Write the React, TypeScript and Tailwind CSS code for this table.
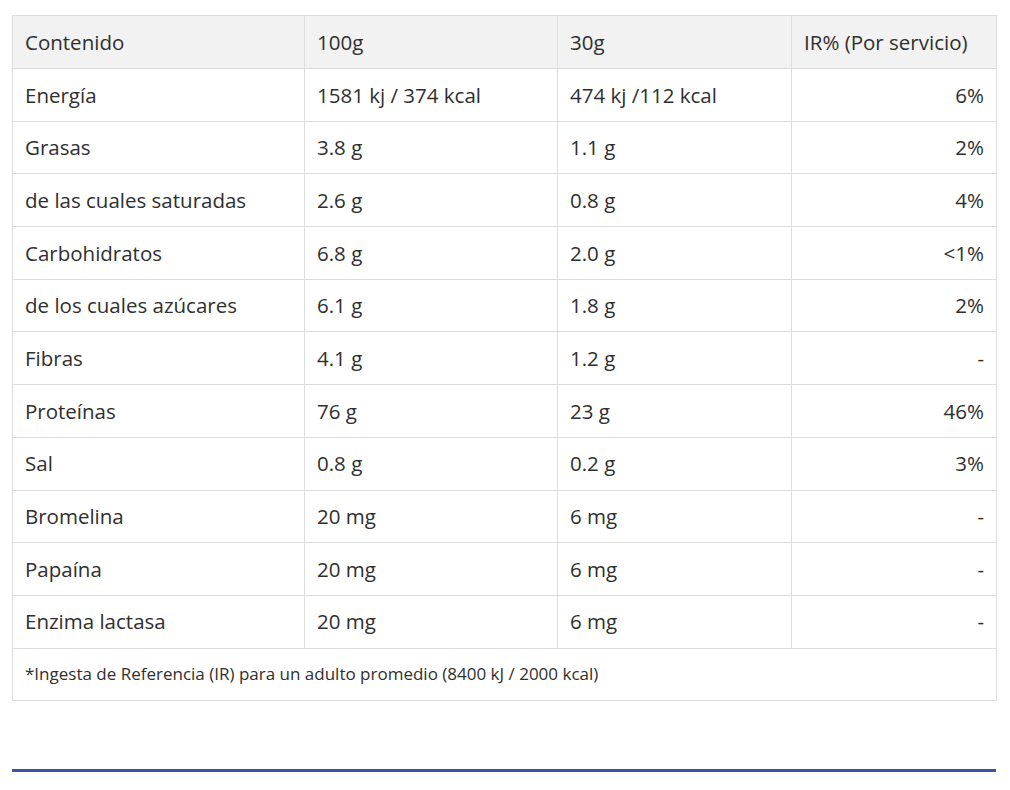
import React from "react";

const rows: [string, string, string, string][] = [
  ["Energía", "1581 kj / 374 kcal", "474 kj /112 kcal", "6%"],
  ["Grasas", "3.8 g", "1.1 g", "2%"],
  ["de las cuales saturadas", "2.6 g", "0.8 g", "4%"],
  ["Carbohidratos", "6.8 g", "2.0 g", "<1%"],
  ["de los cuales azúcares", "6.1 g", "1.8 g", "2%"],
  ["Fibras", "4.1 g", "1.2 g", "-"],
  ["Proteínas", "76 g", "23 g", "46%"],
  ["Sal", "0.8 g", "0.2 g", "3%"],
  ["Bromelina", "20 mg", "6 mg", "-"],
  ["Papaína", "20 mg", "6 mg", "-"],
  ["Enzima lactasa", "20 mg", "6 mg", "-"],
];

export default function App() {
  return (
    <div
      className="w-[1010px] h-[790px] bg-white px-[12px] pt-[15px] text-[#2f2f2f]"
      style={{ fontFamily: '"Open Sans", "Noto Sans", sans-serif' }}
    >
      <table className="w-[984px] border-collapse table-fixed text-[20.5px] leading-[1.2]">
        <colgroup>
          <col className="w-[292px]" />
          <col className="w-[253px]" />
          <col className="w-[234px]" />
          <col className="w-[205px]" />
        </colgroup>
        <thead>
          <tr className="bg-[#f2f2f2] h-[53px]">
            <th className="border border-[#dddddd] px-[12px] text-left font-normal">Contenido</th>
            <th className="border border-[#dddddd] px-[12px] text-left font-normal">100g</th>
            <th className="border border-[#dddddd] px-[12px] text-left font-normal">30g</th>
            <th className="border border-[#dddddd] px-[12px] text-left font-normal">IR% (Por servicio)</th>
          </tr>
        </thead>
        <tbody>
          {rows.map((r) => (
            <tr key={r[0]} className="h-[52.7px]">
              <td className="border border-[#dddddd] px-[12px]">{r[0]}</td>
              <td className="border border-[#dddddd] px-[12px]">{r[1]}</td>
              <td className="border border-[#dddddd] px-[12px]">{r[2]}</td>
              <td className="border border-[#dddddd] px-[12px] text-right">{r[3]}</td>
            </tr>
          ))}
          <tr className="h-[52px]">
            <td colSpan={4} className="border border-[#dddddd] px-[12px] text-[17px]">
              *Ingesta de Referencia (IR) para un adulto promedio (8400 kJ / 2000 kcal)
            </td>
          </tr>
        </tbody>
      </table>
      <div className="mt-[68px] h-[3px] w-[984px] bg-[#3f51a0]" />
    </div>
  );
}
